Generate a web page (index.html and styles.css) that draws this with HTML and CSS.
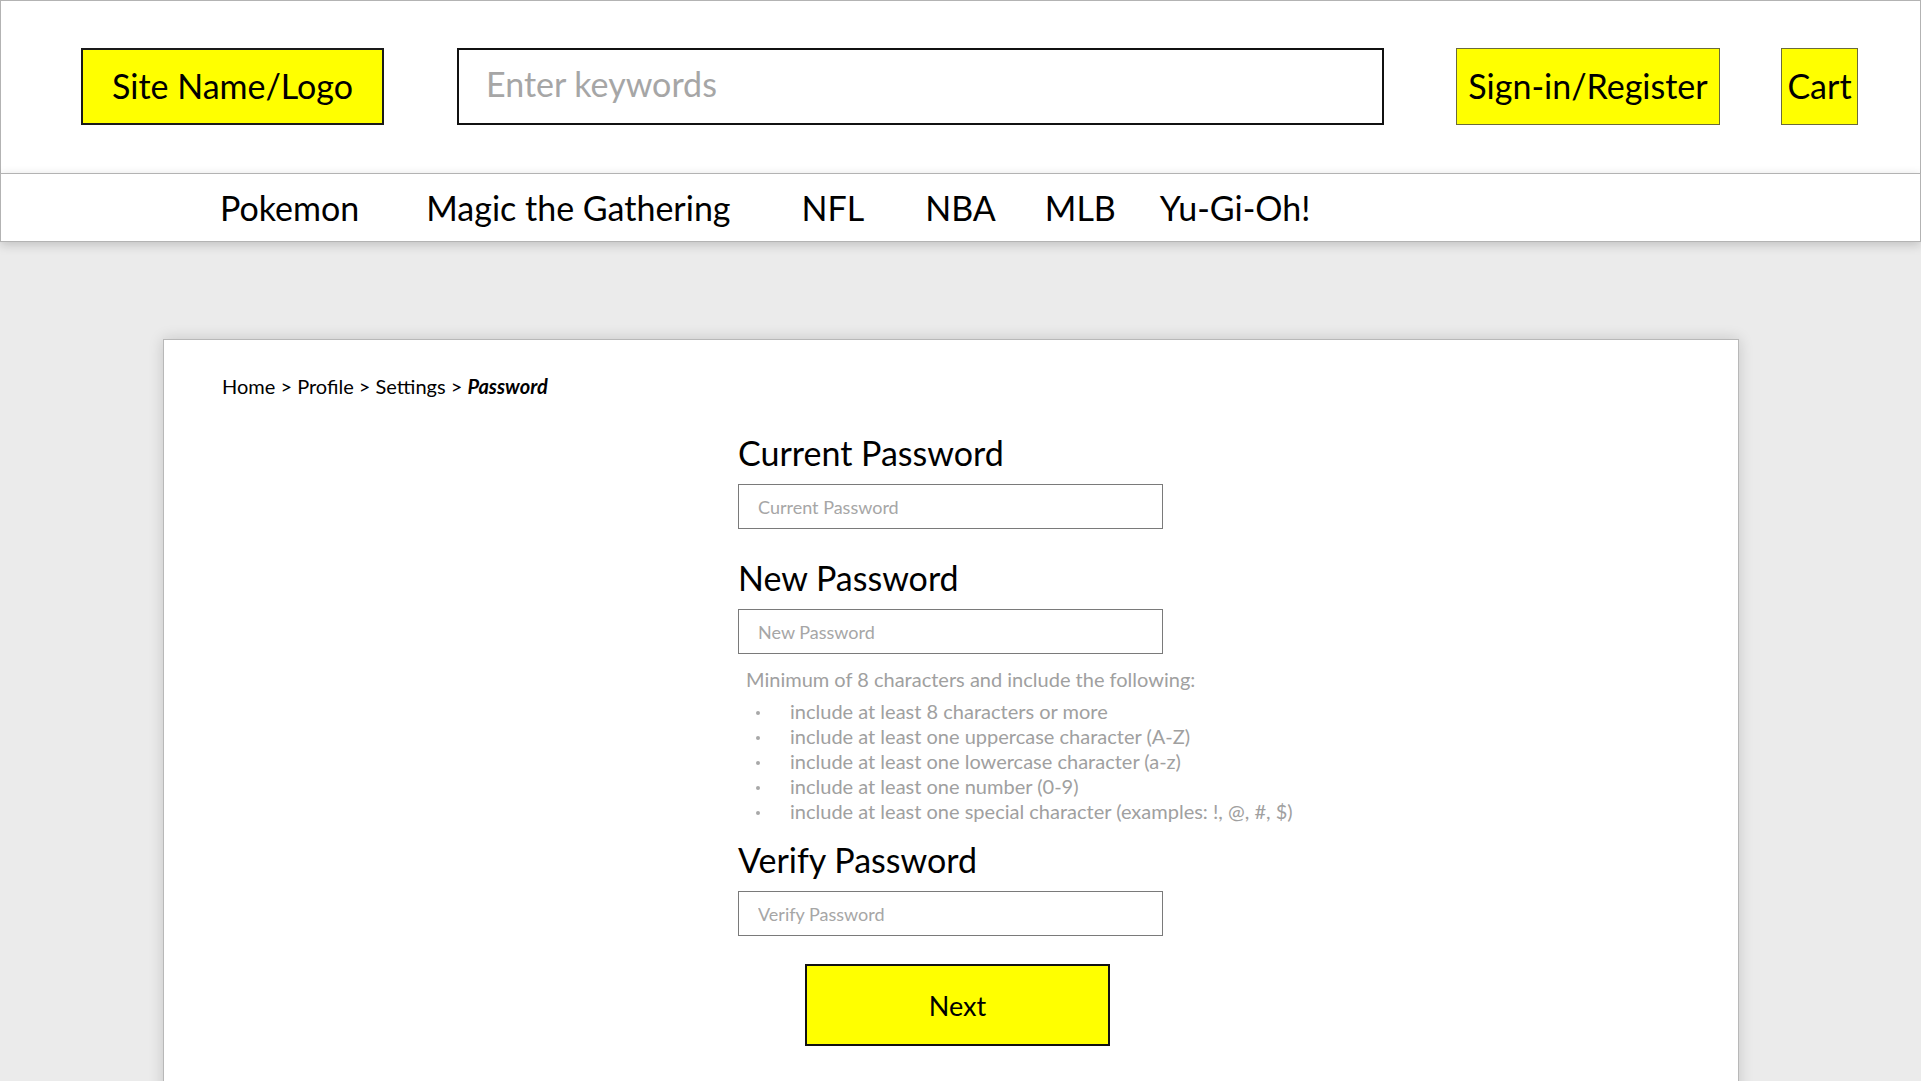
FILE: index.html
```html
<!DOCTYPE html>
<html lang="en">
<head>
<meta charset="utf-8">
<title>Password</title>
<link rel="stylesheet" href="styles.css">
</head>
<body>
<header class="topbar">
  <div class="logo">Site Name/Logo</div>
  <input class="search" type="text" placeholder="Enter keywords">
  <div class="signin">Sign-in/Register</div>
  <div class="cart">Cart</div>
</header>
<nav class="navbar">
  <a class="nav-item nav-pokemon">Pokemon</a>
  <a class="nav-item nav-magic">Magic the Gathering</a>
  <a class="nav-item nav-nfl">NFL</a>
  <a class="nav-item nav-nba">NBA</a>
  <a class="nav-item nav-mlb">MLB</a>
  <a class="nav-item nav-ygo">Yu-Gi-Oh!</a>
</nav>
<main class="page">
  <section class="card">
    <div class="breadcrumb">Home &gt; Profile &gt; Settings &gt; <strong>Password</strong></div>
    <form class="form">
      <h2 class="label">Current Password</h2>
      <input class="field" type="text" placeholder="Current Password">
      <h2 class="label label-gap">New Password</h2>
      <input class="field" type="text" placeholder="New Password">
      <p class="hint">Minimum of 8 characters and include the following:</p>
      <ul class="rules">
        <li>include at least 8 characters or more</li>
        <li>include at least one uppercase character (A-Z)</li>
        <li>include at least one lowercase character (a-z)</li>
        <li>include at least one number (0-9)</li>
        <li>include at least one special character (examples: !, @, #, $)</li>
      </ul>
      <h2 class="label label-verify">Verify Password</h2>
      <input class="field" type="text" placeholder="Verify Password">
      <button class="next" type="button">Next</button>
    </form>
  </section>
</main>
</body>
</html>
```
FILE: styles.css
```css
* { box-sizing: border-box; }
html, body { margin: 0; padding: 0; }
body {
  background: #ebebeb;
  font-family: Lato, "Open Sans", sans-serif;
  color: #000;
  width: 1921px;
  height: 1081px;
  overflow: hidden;
}
.topbar {
  height: 173px;
  background: #fff;
  border: 1px solid #b3b3b3;
  border-bottom: none;
  display: flex;
  align-items: flex-start;
  padding-top: 47px;
  padding-left: 80px;
}
.logo {
  width: 303px;
  height: 77px;
  background: #ffff00;
  border: 2px solid #1a1a1a;
  display: flex;
  align-items: center;
  justify-content: center;
  font-size: 34px;
  padding-bottom: 2px;
}
.search {
  margin-left: 73px;
  width: 927px;
  height: 77px;
  border: 2px solid #111;
  background: #fff;
  font-family: inherit;
  font-size: 34px;
  padding: 0 0 6px 27px;
  outline: none;
}
.search::placeholder { color: #a6a6a6; }
.signin {
  margin-left: 72px;
  width: 264px;
  height: 77px;
  background: #ffff00;
  border: 1.5px solid #6b6b3a;
  display: flex;
  align-items: center;
  justify-content: center;
  font-size: 34px;
  padding-bottom: 2px;
}
.cart {
  margin-left: 61px;
  width: 77px;
  height: 77px;
  background: #ffff00;
  border: 1.5px solid #6b6b3a;
  display: flex;
  align-items: center;
  justify-content: center;
  font-size: 34px;
  padding-bottom: 2px;
}
.navbar {
  height: 69px;
  background: #fff;
  border: 1px solid #b3b3b3;
  display: flex;
  align-items: center;
  padding-left: 219px;
  box-shadow: 0 3px 10px rgba(0,0,0,0.18);
  position: relative;
}
.nav-item { font-size: 34px; color: #000; }
.nav-magic { margin-left: 67px; }
.nav-nfl { margin-left: 71px; }
.nav-nba { margin-left: 61px; }
.nav-mlb { margin-left: 49px; }
.nav-ygo { margin-left: 44px; }
.page {
  padding: 97px 0 0 163px;
}
.card {
  width: 1576px;
  height: 760px;
  background: #fff;
  border: 1px solid #b8b8b8;
  box-shadow: 0 0 14px rgba(0,0,0,0.16);
  padding: 34px 0 0 58px;
}
.breadcrumb {
  font-size: 20px;
  line-height: 24px;
}
.breadcrumb strong { font-style: italic; font-weight: 700; }
.form {
  margin: 35px 0 0 516px;
  width: 700px;
  display: flex;
  flex-direction: column;
  align-items: flex-start;
}
.label {
  margin: 0;
  font-size: 34px;
  font-weight: 400;
  line-height: 40px;
}
.label-gap { margin-top: 29px; }
.label-verify { margin-top: 16px; }
.field {
  margin-top: 11px;
  width: 425px;
  height: 45px;
  border: 1.5px solid #7a7a7a;
  font-family: inherit;
  font-size: 18px;
  padding: 0 0 0 19px;
  outline: none;
}
.field::placeholder { color: #a6a6a6; }
.hint {
  margin: 13px 0 0 8px;
  font-size: 20px;
  line-height: 25px;
  color: #a0a0a0;
}
.rules {
  margin: 7px 0 0 0;
  padding: 0 0 0 18px;
  list-style: none;
  font-size: 20px;
  color: #a0a0a0;
}
.rules li {
  height: 25px;
  line-height: 25px;
  display: flex;
  align-items: center;
}
.rules li::before {
  content: "";
  flex: 0 0 auto;
  width: 4px;
  height: 4px;
  border-radius: 50%;
  background: #a8a8a8;
  margin-right: 30px;
  margin-top: 2px;
}
.next {
  margin: 28px 0 0 67px;
  width: 305px;
  height: 82px;
  background: #ffff00;
  border: 2px solid #111;
  font-family: inherit;
  font-size: 27px;
  color: #000;
  padding: 0;
}
```
